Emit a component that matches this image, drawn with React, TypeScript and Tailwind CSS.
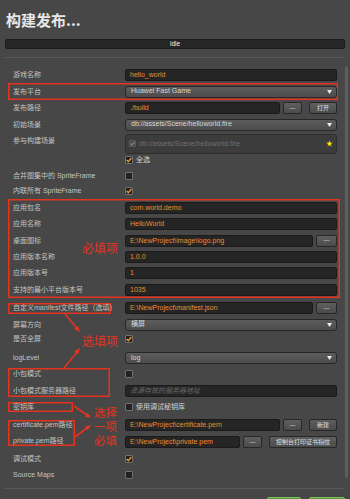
import React from 'react';

const RED = 'shadow-[inset_0_0_0_1.5px_#e3341f]';

const Label = ({ children, className = '' }: { children?: React.ReactNode; className?: string }) => (
  <div className={`w-[117px] shrink-0 whitespace-nowrap pl-[5px] text-[7px] leading-[10px] text-[#c4c4c4] ${className}`}>
    {children}
  </div>
);

const Field = ({ value, placeholder, w = 'flex-1' }: { value?: string; placeholder?: string; w?: string }) => (
  <div
    className={`${w} flex h-[12px] min-w-0 items-center overflow-hidden whitespace-nowrap rounded-[2px] border border-[#1a1a1a] bg-[#252525] px-[4px] text-[7px] ${
      value ? 'text-[#ec8d30]' : 'italic text-[#6a6a6a]'
    }`}
  >
    {value || placeholder}
  </div>
);

const Select = ({ value }: { value: string }) => (
  <div className="flex h-[12px] w-full items-center justify-between rounded-[3px] border border-[#272727] bg-linear-to-b from-[#5d5d5d] to-[#4c4c4c] pl-[5px] pr-[4px] text-[7px] text-[#d6d6d6]">
    <span>{value}</span>
    <svg width="5" height="4" viewBox="0 0 5 4">
      <path d="M0 0h5L2.5 4z" fill="#ececec" />
    </svg>
  </div>
);

const Btn = ({ children, w }: { children: React.ReactNode; w: string }) => (
  <div
    className={`${w} flex h-[12px] shrink-0 items-center justify-center whitespace-nowrap rounded-[2px] border border-[#272727] bg-linear-to-b from-[#5f5f5f] to-[#4b4b4b] text-[6px] text-[#e0e0e0]`}
  >
    {children}
  </div>
);

const Check = ({ on = false }: { on?: boolean }) => (
  <div className="flex h-[8px] w-[8px] shrink-0 items-center justify-center rounded-[1px] border border-[#707070] bg-[#222222]">
    {on && (
      <svg width="7" height="6" viewBox="0 0 7 6">
        <path d="M0.8 3.1 2.7 5 6.3 0.7" fill="none" stroke="#f39a2c" strokeWidth="1.6" />
      </svg>
    )}
  </div>
);

const Row = ({
  label,
  children,
  h = 'h-[16.5px]',
  className = '',
}: {
  label?: React.ReactNode;
  children?: React.ReactNode;
  h?: string;
  className?: string;
}) => (
  <div className={`flex ${h} items-center ${className}`}>
    <Label>{label}</Label>
    <div className="flex w-[212px] shrink-0 items-center gap-[3px]">{children}</div>
  </div>
);

export default function App() {
  return (
    <div className="relative h-[499px] w-[350px] overflow-hidden bg-[#474747] font-['Liberation_Sans','Noto_Sans_CJK_SC',sans-serif]">
      {/* Title + progress */}
      <div className="px-[5px] pt-[11px]">
        <div className="h-[18px] pl-[1px] font-['Noto_Sans_CJK_SC',sans-serif] text-[15px] font-bold leading-[18px] text-[#e8e8e8]">
          构建发布...
        </div>
        <div className="mt-[10px] flex h-[10px] items-center justify-center rounded-[2px] border border-[#1c1c1c] bg-[#262626] text-[6.5px] text-[#f2f2f2]">
          idle
        </div>
        <div className="mt-[8px] h-px bg-[#5a5a5a]" />
      </div>

      {/* Form */}
      <div className="flex pl-[8px]">
        <div className="mt-[8.75px] flex w-[332px] flex-col">
          <Row label="游戏名称">
            <Field value="hello_world" />
          </Row>
          <div className={`flex h-[16.5px] w-[330px] items-center ${RED}`}>
            <Label>发布平台</Label>
            <div className="w-[212px] shrink-0">
              <Select value="Huawei Fast Game" />
            </div>
          </div>
          <Row label="发布路径">
            <Field value="./build" />
            <Btn w="w-[19px]">—</Btn>
            <div className="ml-[1px]" />
            <Btn w="w-[28px]">打开</Btn>
          </Row>
          <Row label="初始场景">
            <Select value="db://assets/Scene/helloworld.fire" />
          </Row>
          <div className="flex h-[19.5px]">
            <Label className="pt-[3px]">参与构建场景</Label>
            <div className="mt-[1px] flex h-[20px] w-[212px] shrink-0 items-center rounded-[3px] border border-[#2d2d2d] bg-[#3c3c3c] px-[3px]">
              <div className="flex h-[7px] w-[7px] items-center justify-center rounded-[1px] border border-[#5c5c5c] bg-[#4a4a4a]">
                <svg width="6" height="5" viewBox="0 0 7 6">
                  <path d="M0.8 3.1 2.7 5 6.3 0.7" fill="none" stroke="#8a8a8a" strokeWidth="1.5" />
                </svg>
              </div>
              <span className="ml-[3px] flex-1 text-[7px] text-[#707070]">db://assets/Scene/helloworld.fire</span>
              <svg width="7" height="7" viewBox="0 0 10 10">
                <path
                  d="M5 0.4 6.3 3.6 9.6 3.8 7.1 6 7.9 9.4 5 7.6 2.1 9.4 2.9 6 0.4 3.8 3.7 3.6z"
                  fill="#ffe81a"
                  stroke="#6b5a00"
                  strokeWidth="0.6"
                />
              </svg>
            </div>
          </div>
          <Row h="h-[15.5px]">
            <Check on />
            <span className="text-[7px] text-[#d2d2d2]">全选</span>
          </Row>
          <Row h="h-[15.5px]" label="合并图集中的 SpriteFrame">
            <Check />
          </Row>
          <Row h="h-[15.5px]" label="内联所有 SpriteFrame">
            <Check on />
          </Row>

          {/* Required block */}
          <div className={`mt-[0.25px] flex h-[99px] flex-col pt-[1px] ${RED}`}>
            <Row h="h-[16.4px]" label="应用包名">
              <Field value="com.world.demo" />
            </Row>
            <Row h="h-[16.4px]" label="应用名称">
              <Field value="HelloWorld" />
            </Row>
            <Row h="h-[16.4px]" label="桌面图标">
              <Field value="E:\NewProject\image\logo.png" />
              <Btn w="w-[21px]">—</Btn>
            </Row>
            <Row h="h-[16.4px]" label="应用版本名称">
              <Field value="1.0.0" />
            </Row>
            <Row h="h-[16.4px]" label="应用版本号">
              <Field value="1" />
            </Row>
            <Row h="h-[16.4px]" label="支持的最小平台版本号">
              <Field value="1035" />
            </Row>
          </div>

          <div className="mt-[1.75px] flex h-[16.5px] items-center">
            <div className="w-[117px] shrink-0">
              <div className={`flex h-[11px] w-[103px] items-center whitespace-nowrap pl-[5px] text-[7px] text-[#c4c4c4] ${RED}`}>
                自定义manifest文件路径（选填）
              </div>
            </div>
            <div className="flex w-[212px] shrink-0 items-center gap-[3px]">
              <Field value="E:\NewProject\manifest.json" />
              <Btn w="w-[21px]">—</Btn>
            </div>
          </div>
          <Row label="屏幕方向">
            <Select value="横屏" />
          </Row>
          <Row h="h-[17px] pb-[4px]" label="是否全屏">
            <Check on />
          </Row>
          <Row label="logLevel">
            <Select value="log" />
          </Row>

          {/* Small package mode */}
          <div className="flex h-[32.5px] items-center">
            <div className="w-[117px] shrink-0">
              <div className={`flex h-[29px] w-[102px] flex-col justify-between py-[1px] pl-[5px] text-[7px] leading-[10px] text-[#c4c4c4] ${RED}`}>
                <div>小包模式</div>
                <div>小包模式服务器路径</div>
              </div>
            </div>
            <div className="flex h-[29px] w-[212px] shrink-0 flex-col justify-between">
              <div className="flex h-[12px] items-center">
                <Check />
              </div>
              <div className="flex h-[12px] items-center">
                <Field placeholder="资源存放的服务器地址" />
              </div>
            </div>
          </div>

          <div className="flex h-[16.5px] items-center">
            <div className="w-[117px] shrink-0">
              <div className={`flex h-[10px] w-[65px] items-center pl-[5px] text-[7px] text-[#c4c4c4] ${RED}`}>密钥库</div>
            </div>
            <div className="flex items-center gap-[3px]">
              <Check />
              <span className="text-[7px] text-[#d2d2d2]">使用调试秘钥库</span>
            </div>
          </div>

          {/* Certificates */}
          <div className="flex">
            <div className="w-[117px] shrink-0 pt-[4.75px]">
              <div className={`flex h-[26px] w-[67px] flex-col justify-between whitespace-nowrap pl-[5px] text-[7px] leading-[10px] text-[#c4c4c4] ${RED}`}>
                <div>certificate.pem路径</div>
                <div>private.pem路径</div>
              </div>
            </div>
            <div className="flex w-[212px] shrink-0 flex-col pt-[1.25px]">
              <div className="flex h-[17px] items-center gap-[3px]">
                <Field value="E:\NewProject\certificate.pem" />
                <Btn w="w-[19px]">—</Btn>
                <div className="ml-[1px]" />
                <Btn w="w-[28px]">新建</Btn>
              </div>
              <div className="flex h-[17px] items-center gap-[3px]">
                <Field value="E:\NewProject\private.pem" />
                <Btn w="w-[19px]">—</Btn>
                <div className="ml-[1px]" />
                <Btn w="w-[68px]">控制台打印证书指纹</Btn>
              </div>
            </div>
          </div>

          <Row h="h-[16px]" label="调试模式">
            <Check on />
          </Row>
          <Row label="Source Maps">
            <Check />
          </Row>
        </div>
        <div className="ml-[5px] mt-[8px] mb-[5px] w-[3px] rounded-full bg-[#5e5e5e]" />
      </div>

      {/* Footer */}
      <div className="mx-[5px] mt-[5px] h-px bg-[#5a5a5a]" />
      <div className="mt-[8px] flex justify-end gap-[8px] pr-[5px]">
        <div className="h-[18px] w-[34px] rounded-[2px] border border-[#7cc35f] bg-[#4f9b3a]" />
        <div className="h-[18px] w-[36px] rounded-[2px] border border-[#7cc35f] bg-[#4f9b3a]" />
      </div>

      {/* Annotations */}
      <div className="pointer-events-none absolute inset-0">
        <svg className="absolute inset-0" width="350" height="499" viewBox="0 0 350 499">
          <g stroke="#e3341f" strokeWidth="1.6" fill="#e3341f">
            <line x1="65" y1="314" x2="77" y2="328.5" />
            <polygon points="80,332 74.2,329.0 78.1,325.8" stroke="none" />
            <line x1="64" y1="368" x2="77.5" y2="351.5" />
            <polygon points="80,348 78.2,354.3 74.3,351.1" stroke="none" />
            <line x1="74" y1="406" x2="87.5" y2="415.5" />
            <polygon points="91,418 84.7,416.6 87.5,412.5" stroke="none" />
            <line x1="75" y1="437" x2="87.5" y2="427.5" />
            <polygon points="91,425 87.7,430.6 84.7,426.6" stroke="none" />
          </g>
        </svg>
        <div className="absolute left-[82px] top-[242px] font-['Noto_Sans_CJK_SC',sans-serif] text-[12px] leading-[12px] text-[#e3341f]">
          必填项
        </div>
        <div className="absolute left-[82px] top-[335px] font-['Noto_Sans_CJK_SC',sans-serif] text-[12px] leading-[12px] text-[#e3341f]">
          选填项
        </div>
        <div className="absolute left-[94px] top-[405px] font-['Noto_Sans_CJK_SC',sans-serif] text-[11.5px] leading-[14px] text-[#e3341f]">
          <div className="h-[14px]">选择</div>
          <div className="h-[14px]">一项</div>
          <div className="h-[14px]">必填</div>
        </div>
      </div>
    </div>
  );
}
